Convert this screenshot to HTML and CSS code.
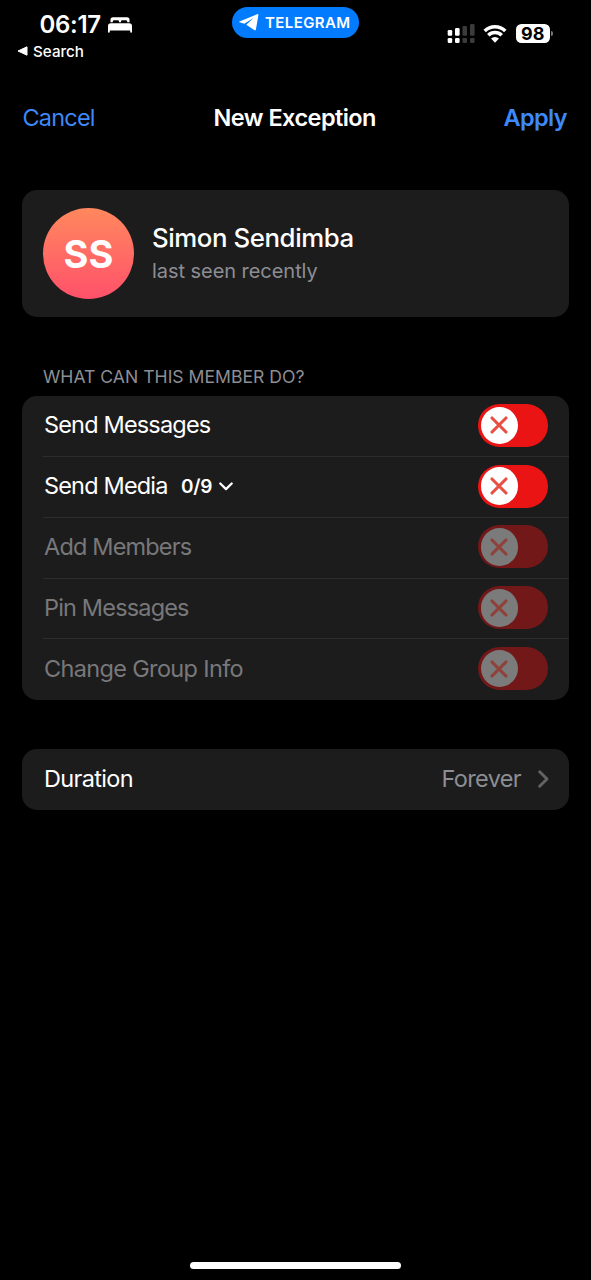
FILE: index.html
```html
<!DOCTYPE html>
<html lang="en">
<head>
<meta charset="utf-8">
<title>New Exception</title>
<link rel="stylesheet" href="styles.css">
</head>
<body>
<div class="screen">
  <div class="status">
    <div class="status-left">
      <div class="clock"><span class="time">06:17</span>
        <svg class="bed" viewBox="0 0 24 16" width="24" height="16"><path fill="#fff" d="M2.500 5.300V2.800A2.500 2.500 0 0 1 5 .3h14a2.500 2.500 0 0 1 2.500 2.500v2.500h-2.300V4.400a1.200 1.200 0 0 0-1.200-1.200h-3.800A1.200 1.200 0 0 0 13 4.400v.9h-2v-.9a1.200 1.200 0 0 0-1.200-1.200H6a1.200 1.200 0 0 0-1.200 1.200v.9zM0 9a2.800 2.800 0 0 1 2.800-2.800h18.400A2.800 2.800 0 0 1 24 9v5.800a.9.9 0 0 1-1.800 0v-1.300H1.800v1.300a.9.9 0 0 1-1.800 0z"/></svg>
      </div>
      <div class="back"><svg viewBox="0 0 11 10" width="11" height="10"><path d="M10 .8v8.400L1 5z" fill="#fff" stroke="#fff" stroke-width="1" stroke-linejoin="round"/></svg><span class="back-text">Search</span></div>
    </div>
    <div class="pill">
      <svg viewBox="0 0 20 17" width="20" height="17"><path fill="#fff" d="M.5 7.500 18.200.2c.8-.3 1.300.2 1.200 1l-2.500 14.200c-.2 1-.9 1.200-1.700.7L7.300 10.700 14.500 4.100 5.300 9.700.6 8.300C0 8.100 0 7.700.5 7.500z"/></svg>
      <span class="pill-text">TELEGRAM</span>
    </div>
    <div class="status-right">
      <svg class="signal" viewBox="0 0 28 20" width="28" height="20"><g fill="#fff"><rect x=".7" y="6" width="4.500" height="5.800" rx="1.300"/><rect x="8" y="4" width="4.600" height="7.800" rx="1.300"/><rect x=".7" y="14" width="4.500" height="5" rx="1.300"/><rect x="8" y="14" width="4.600" height="5" rx="1.300"/></g><g fill="#3b3b3b"><rect x="15.500" y="2" width="4.500" height="9.800" rx="1.300"/><rect x="23" y="0" width="4.600" height="11.800" rx="1.300"/><rect x="15.500" y="14" width="4.500" height="5" rx="1.300"/><rect x="23" y="14" width="4.600" height="5" rx="1.300"/></g></svg>
      <svg class="wifi" viewBox="0 0 24 18" width="24" height="18"><g fill="none" stroke="#fff" stroke-width="3.500"><path d="M1.700 6.100a14.600 14.600 0 0 1 20.600 0"/><path d="M5.300 10.200a9.400 9.400 0 0 1 13.400 0"/></g><path fill="#fff" d="M12 17.700 8 13.600a5.600 5.600 0 0 1 8 0z"/></svg>
      <div class="battery"><span class="level">98</span></div><i class="nub"></i>
    </div>
  </div>

  <nav class="nav">
    <span class="cancel">Cancel</span>
    <span class="title">New Exception</span>
    <span class="apply">Apply</span>
  </nav>

  <section class="card member">
    <div class="avatar"><span class="initials">SS</span></div>
    <div class="who">
      <div class="name">Simon Sendimba</div>
      <div class="seen">last seen recently</div>
    </div>
  </section>

  <h2 class="heading"><span class="heading-text">WHAT CAN THIS MEMBER DO?</span></h2>
  <section class="card list">
    <div class="row"><span class="label">Send Messages</span><span class="toggle"><span class="knob"><svg viewBox="0 0 18 18" width="18" height="18"><path d="M2 2l14 14M16 2L2 16"/></svg></span></span></div>
    <div class="row"><span class="label">Send Media</span><span class="count">0/9</span><svg class="down" viewBox="0 0 14 9" width="14" height="9"><path d="M1.300 1.500 7 7.100l5.700-5.600" fill="none" stroke="#fff" stroke-width="2.300" stroke-linecap="round" stroke-linejoin="round"/></svg><span class="toggle"><span class="knob"><svg viewBox="0 0 18 18" width="18" height="18"><path d="M2 2l14 14M16 2L2 16"/></svg></span></span></div>
    <div class="row off"><span class="label">Add Members</span><span class="toggle"><span class="knob"><svg viewBox="0 0 18 18" width="18" height="18"><path d="M2 2l14 14M16 2L2 16"/></svg></span></span></div>
    <div class="row off"><span class="label">Pin Messages</span><span class="toggle"><span class="knob"><svg viewBox="0 0 18 18" width="18" height="18"><path d="M2 2l14 14M16 2L2 16"/></svg></span></span></div>
    <div class="row off"><span class="label wide">Change Group Info</span><span class="toggle"><span class="knob"><svg viewBox="0 0 18 18" width="18" height="18"><path d="M2 2l14 14M16 2L2 16"/></svg></span></span></div>
  </section>

  <section class="card duration">
    <span class="label wide">Duration</span>
    <span class="value">Forever</span>
    <svg viewBox="0 0 11 18" width="11" height="18"><path d="M1.700 1.700 9 9l-7.300 7.300" fill="none" stroke="#636366" stroke-width="2.900" stroke-linecap="round" stroke-linejoin="round"/></svg>
  </section>

  <div class="home"></div>
</div>
</body>
</html>
```
FILE: styles.css
```css
* { box-sizing: border-box; }
body { margin: 0; background: #000; color: #fff; font-family: Inter, "Liberation Sans", sans-serif; }
svg { display: block; flex: none; }
span { white-space: nowrap; }
.screen { width: 591px; height: 1280px; display: flex; flex-direction: column; }

.status { height: 84px; display: grid; grid-template-columns: 231px 128px 1fr; align-items: start; }
.status-left { padding: 10px 0 0 17px; }
.clock { display: flex; align-items: center; height: 29px; padding-left: 22.500px; gap: 7px; }
.time { font-size: 24px; font-weight: 600; width: 61px; letter-spacing: -.3px; }
.back { display: flex; align-items: center; gap: 5px; height: 24px; }
.back-text { font-size: 15.200px; font-weight: 500; }
.pill { margin: 7px 0 0 .5px; height: 30.500px; border-radius: 16px; background: #037bff; display: flex; align-items: center; padding-left: 7px; gap: 6.500px; }
.pill-text { font-size: 15px; font-weight: 600; letter-spacing: .4px; }
.status-right { display: flex; align-items: center; height: 19px; margin: 24px 0 0 88px; }
.wifi { margin-left: 8px; }
.battery { margin-left: 8.500px; width: 34.500px; height: 19px; border-radius: 5.500px; background: #fff; color: #000; display: flex; align-items: center; justify-content: center; }
.level { font-size: 18px; font-weight: 700; line-height: 19px; }
.nub { width: 2px; height: 5px; margin-left: 1px; border-radius: 0 2px 2px 0; background: #777; }

.nav { height: 68px; padding: 0 24px 2px 22.500px; display: grid; grid-template-columns: 1fr auto 1fr; align-items: center; font-size: 23.500px; }
.cancel, .apply { color: #3e88f7; letter-spacing: -.8px; }
.apply { font-weight: 600; text-align: right; letter-spacing: -.6px; }
.title { font-weight: 600; letter-spacing: -.55px; }

.card { margin: 0 22px; background: #1c1c1d; border-radius: 15px; flex: none; }
.member { margin-top: 38px; height: 127px; display: flex; align-items: center; padding-left: 21px; gap: 18px; }
.avatar { width: 91px; height: 91px; border-radius: 50%; background: linear-gradient(#ff885e, #ff516a); display: flex; align-items: center; justify-content: center; }
.initials { font-size: 38px; font-weight: 700; }
.name { font-size: 25.800px; font-weight: 500; line-height: 34px; white-space: nowrap; letter-spacing: -.42px; }
.seen { font-size: 20px; line-height: 32px; color: #8d8e93; white-space: nowrap; letter-spacing: -.05px; }

.heading { margin: 0; height: 79px; padding: 50px 0 0 43px; font-size: 17.600px; line-height: 20px; font-weight: 400; color: #8d8e93; }
.list { height: 304px; display: grid; grid-template-rows: repeat(5, 60.800px); }
.row { position: relative; display: flex; align-items: center; padding: 0 21px 2px 22px; }
.row + .row::before { content: ""; position: absolute; left: 21px; right: 0; top: -.9px; height: 1px; background: #2d2d2f; }
.label { font-size: 23.500px; letter-spacing: -.83px; padding-bottom: 1px; }
.label.wide { letter-spacing: -.66px; }
.off .label { color: #78787a; }
.count { margin-left: 13.500px; font-size: 19px; font-weight: 600; letter-spacing: -.3px; }
.down { margin-left: 7px; }
.toggle { margin-left: auto; width: 70px; height: 43px; border-radius: 22px; background: #eb1414; display: flex; align-items: center; padding-left: 2.500px; flex: none; }
.knob { width: 37.500px; height: 37.500px; border-radius: 50%; background: #fff; display: flex; align-items: center; justify-content: center; }
.knob path { fill: none; stroke: #e74f43; stroke-width: 3.100; stroke-linecap: round; }
.off .toggle { background: #731819; }
.off .knob { background: #7b7b7b; }
.off .knob path { stroke: #8e4039; }

.duration { margin-top: 48.500px; height: 61px; display: flex; align-items: center; padding: 0 20px 0 22px; }
.duration .label, .value { padding-bottom: 2px; }
.value { margin-left: auto; margin-right: 17px; font-size: 23.500px; color: #8d8e93; letter-spacing: -.65px; }
.home { width: 211px; height: 7px; border-radius: 4px; background: #fff; margin: auto auto 11px 190px; flex: none; }
```
